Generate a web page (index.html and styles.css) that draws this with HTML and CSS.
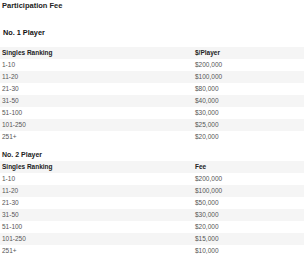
FILE: index.html
```html
<!DOCTYPE html>
<html>
<head>
<meta charset="utf-8">
<link rel="stylesheet" href="styles.css">
</head>
<body>
<h1 class="title">Participation Fee</h1>
<h2 class="subtitle">No. 1 Player</h2>
<table class="fees">
  <thead>
    <tr><th class="col-rank">Singles Ranking</th><th>$/Player</th></tr>
  </thead>
  <tbody>
    <tr><td>1-10</td><td>$200,000</td></tr>
    <tr><td>11-20</td><td>$100,000</td></tr>
    <tr><td>21-30</td><td>$80,000</td></tr>
    <tr><td>31-50</td><td>$40,000</td></tr>
    <tr><td>51-100</td><td>$30,000</td></tr>
    <tr><td>101-250</td><td>$25,000</td></tr>
    <tr><td>251+</td><td>$20,000</td></tr>
  </tbody>
</table>
<table class="fees second">
  <caption>No. 2 Player</caption>
  <thead>
    <tr><th class="col-rank">Singles Ranking</th><th>Fee</th></tr>
  </thead>
  <tbody>
    <tr><td>1-10</td><td>$200,000</td></tr>
    <tr><td>11-20</td><td>$100,000</td></tr>
    <tr><td>21-30</td><td>$50,000</td></tr>
    <tr><td>31-50</td><td>$30,000</td></tr>
    <tr><td>51-100</td><td>$20,000</td></tr>
    <tr><td>101-250</td><td>$15,000</td></tr>
    <tr><td>251+</td><td>$10,000</td></tr>
  </tbody>
</table>
</body>
</html>
```
FILE: styles.css
```css
html, body {
  margin: 0;
  padding: 0;
  background: #fff;
}
body {
  font-family: "Liberation Sans", Arial, sans-serif;
  color: #222;
}
.title {
  margin: 0;
  padding-left: 2px;
  font-size: 7.5px;
  line-height: 12px;
  font-weight: bold;
  color: #222;
}
.subtitle {
  margin: 15px 0 8px;
  padding-left: 3px;
  font-size: 7.3px;
  line-height: 12px;
  font-weight: bold;
  color: #111;
}
.fees {
  width: 304px;
  border-collapse: collapse;
  font-size: 6.5px;
  line-height: 12px;
}
.fees caption {
  text-align: left;
  padding-left: 2px;
  font-size: 7px;
  font-weight: bold;
  color: #222;
  height: 12px;
}
.second {
  margin-top: 6px;
}
.fees th, .fees td {
  padding: 0 2px;
  height: 12px;
  text-align: left;
  vertical-align: middle;
}
.fees th {
  font-weight: bold;
  color: #222;
  background: #f5f5f5;
}
.fees td {
  color: #555;
}
.col-rank {
  width: 189px;
}
.fees tbody tr:nth-child(even) td {
  background: #f5f5f5;
}
```
